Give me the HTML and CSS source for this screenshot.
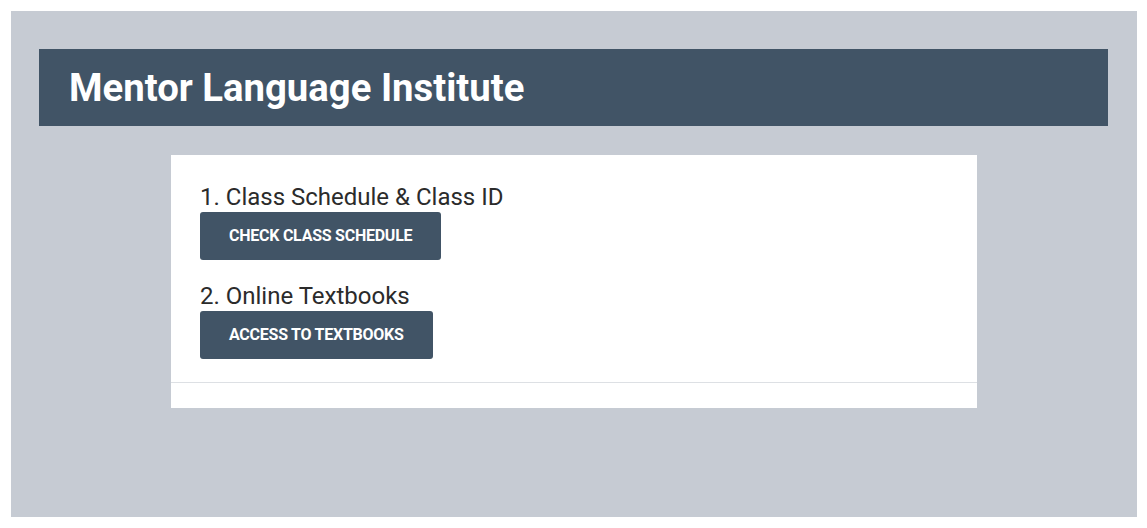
FILE: index.html
```html
<!DOCTYPE html>
<html lang="en">

<head>
    <meta charset="UTF-8">
    <meta name="viewport" content="width=device-width, initial-scale=1.0">
    <title>Mentor Language Institute</title>

    <link rel="stylesheet" href="styles.css">
</head>

<body>
    <div class="page">
        <header class="site-header">
            <h1>Mentor Language Institute</h1>
        </header>

        <div class="panel">
            <div class="panel-body">
                <div class="link-item">
                    <h3>1. Class Schedule &amp; Class ID</h3>
                    <a class="btn" href="#">Check Class Schedule</a>
                </div>
                <div class="link-item">
                    <h3>2. Online Textbooks</h3>
                    <a class="btn" href="#">Access to Textbooks</a>
                </div>
            </div>
            <div class="panel-footer"></div>
        </div>
    </div>
</body>

</html>
```

FILE: styles.css
```css
html {
    height: 100%;
}

body {
    margin: 0;
    padding: 11px 10px 11px 11px;
    background: #fff;
    font-family: Roboto, "Liberation Sans", sans-serif;
    box-sizing: border-box;
    height: 100%;
}

.page {
    height: 100%;
    padding: 38px 29px 0 28px;
    box-sizing: border-box;
    background: #c6cbd3;
}

.site-header {
    height: 77px;
    padding: 0 30px;
    display: flex;
    align-items: center;
    background: #415466;
}

.site-header h1 {
    margin: 0;
    color: #fff;
    font-size: 38.3px;
    font-weight: 700;
}

.panel {
    width: 806px;
    margin: 29px 0 0 132px;
    background: #fff;
}

.panel-body {
    padding: 27px 29px 23px;
    display: flex;
    flex-direction: column;
    gap: 21px;
}

.link-item h3 {
    margin: 0;
    color: #2b2b2b;
    font-size: 24px;
    font-weight: 400;
    line-height: 30px;
}

.btn {
    display: inline-block;
    height: 48px;
    line-height: 48px;
    padding: 0 29px;
    border-radius: 3px;
    background: #415466;
    color: #fff;
    font-size: 16px;
    font-weight: 700;
    letter-spacing: -0.25px;
    text-transform: uppercase;
    text-decoration: none;
}

.panel-footer {
    height: 25px;
    border-top: 1px solid #dde0e4;
}
```
